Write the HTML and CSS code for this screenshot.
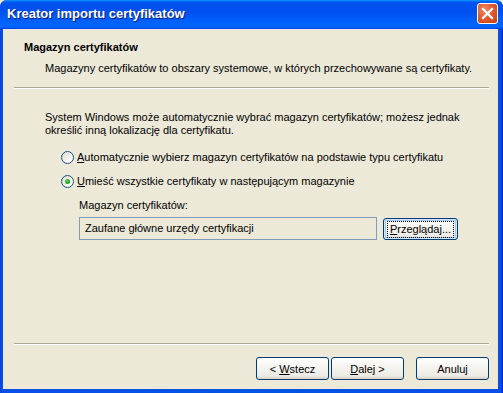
FILE: index.html
```html
<html>

<head>
    <title>Kreator importu certyfikatów</title>
    <link rel="stylesheet" href="styles.css">
</head>

<body>
    <div class="window">
        <div class="titlebar">
            <div class="title">Kreator importu certyfikatów</div>
            <div class="close">
                <svg width="13" height="13" viewBox="0 0 13 13">
                    <path d="M2 2 L11 11 M11 2 L2 11" stroke="#fff" stroke-width="2.2" stroke-linecap="square" />
                </svg>
            </div>
        </div>
        <div class="client">
            <div class="header">
                <div class="head_title">Magazyn certyfikatów</div>
                <div class="head_sub">Magazyny certyfikatów to obszary systemowe, w których przechowywane są certyfikaty.</div>
            </div>
            <div class="sep"></div>
            <div class="page">
                <div class="intro">System Windows może automatycznie wybrać magazyn certyfikatów; możesz jednak<br>określić inną lokalizację dla certyfikatu.</div>
                <div class="radio">
                    <span class="circle"></span>
                    <span><u>A</u>utomatycznie wybierz magazyn certyfikatów na podstawie typu certyfikatu</span>
                </div>
                <div class="radio second">
                    <span class="circle checked"><span class="dot"></span></span>
                    <span><u>U</u>mieść wszystkie certyfikaty w następującym magazynie</span>
                </div>
                <div class="store_label">Magazyn certyfikatów:</div>
                <div class="store_row">
                    <div class="field">Zaufane główne urzędy certyfikacji</div>
                    <div class="button browse"><span class="focus"><u>P</u>rzeglądaj...</span></div>
                </div>
            </div>
            <div class="footer">
                <div class="sep"></div>
                <div class="buttons">
                    <div class="button"><span>&lt; <u>W</u>stecz</span></div>
                    <div class="button"><span><u>D</u>alej &gt;</span></div>
                    <div class="button cancel"><span>Anuluj</span></div>
                </div>
            </div>
        </div>
    </div>
</body>

</html>
```

FILE: styles.css
```css
body {
    margin: 0;
    background-color: #ece9d8;
    font-family: "Liberation Sans", Arial, sans-serif;
    font-size: 11px;
    color: #000;
}

u {
    text-decoration: underline;
    text-underline-offset: 1px;
}

.window {
    width: 503px;
    height: 393px;
    display: flex;
    flex-direction: column;
    background: linear-gradient(to right, #0842d9 0, #0a4ee8 2px, #0054e3 50%, #0a4ee8 calc(100% - 2px), #0019cf 100%);
    border-radius: 7px 7px 0 0;
    overflow: hidden;
}

.titlebar {
    height: 29px;
    flex-shrink: 0;
    display: flex;
    align-items: center;
    padding: 0 5px 0 7px;
    background: linear-gradient(to bottom, #0997ff 0, #0053ee 8%, #0050ee 40%, #0066ff 86%, #0066ff 92%, #005bff 95%, #003dd7 100%);
}

.title {
    flex: 1;
    color: #fff;
    font-family: "Liberation Sans", Arial, sans-serif;
    font-weight: bold;
    font-size: 13px;
    text-shadow: 1px 1px 0 #0a1883;
    padding-bottom: 2px;
}

.close {
    width: 19px;
    height: 19px;
    margin-top: -2px;
    border: 1px solid #fff;
    border-radius: 3px;
    background: radial-gradient(circle at 35% 30%, #f08a6a 0, #e35b32 45%, #cc3a12 100%);
    display: flex;
    justify-content: center;
    align-items: center;
}

.client {
    flex: 1;
    margin: 0 5px 4px 3px;
    background-color: #ece9d8;
    display: flex;
    flex-direction: column;
}

.header {
    padding: 12px 0 0 21px;
    line-height: 13px;
}

.head_title {
    font-weight: bold;
}

.head_sub {
    margin: 8px 0 0 21px;
}

.sep {
    height: 1px;
    margin: 12px 9px 0 11px;
    background-color: #aca899;
    border-bottom: 1px solid #fff;
}

.page {
    flex: 1;
    padding-left: 42px;
    line-height: 13px;
}

.intro {
    margin-top: 22px;
}

.radio {
    margin: 14px 0 0 16px;
    display: flex;
    align-items: center;
    gap: 3px;
    height: 13px;
}

.radio.second {
    margin-top: 11px;
}

.circle {
    width: 11px;
    height: 11px;
    border: 1px solid #1c5180;
    border-radius: 50%;
    background: linear-gradient(135deg, #dcd9cf 0, #f4f3ee 60%, #fff 100%);
    display: flex;
    justify-content: center;
    align-items: center;
}

.dot {
    width: 5px;
    height: 5px;
    border-radius: 50%;
    background: radial-gradient(circle at 35% 35%, #5fd35f 0, #21a121 60%, #1a8a1a 100%);
}

.store_label {
    margin: 11px 0 0 34px;
}

.store_row {
    margin: 5px 0 0 34px;
    display: flex;
    align-items: flex-start;
    gap: 6px;
}

.field {
    width: 291px;
    height: 21px;
    line-height: 21px;
    padding-left: 5px;
    border: 1px solid #7f9db9;
}

.button {
    width: 71px;
    height: 21px;
    border: 1px solid #003c74;
    border-radius: 3px;
    background: linear-gradient(to bottom, #fff 0, #f6f5f0 40%, #ecebe6 85%, #d6d0c5 100%);
    display: flex;
    justify-content: center;
    align-items: center;
    box-sizing: content-box;
    white-space: pre;
}

.browse {
    width: 73px;
    height: 20px;
    margin-top: 1px;
    box-shadow: inset 0 0 0 1px #cee7ff, inset 0 0 0 2px #a8c7f0;
}

.focus {
    padding: 1px 2px;
    outline: 1px dotted #000;
    outline-offset: 0;
}

.footer {
    padding-bottom: 9px;
}

.buttons {
    margin: 12px 9px 0 0;
    display: flex;
    justify-content: flex-end;
    gap: 2px;
}

.cancel {
    margin-left: 10px;
}
```
